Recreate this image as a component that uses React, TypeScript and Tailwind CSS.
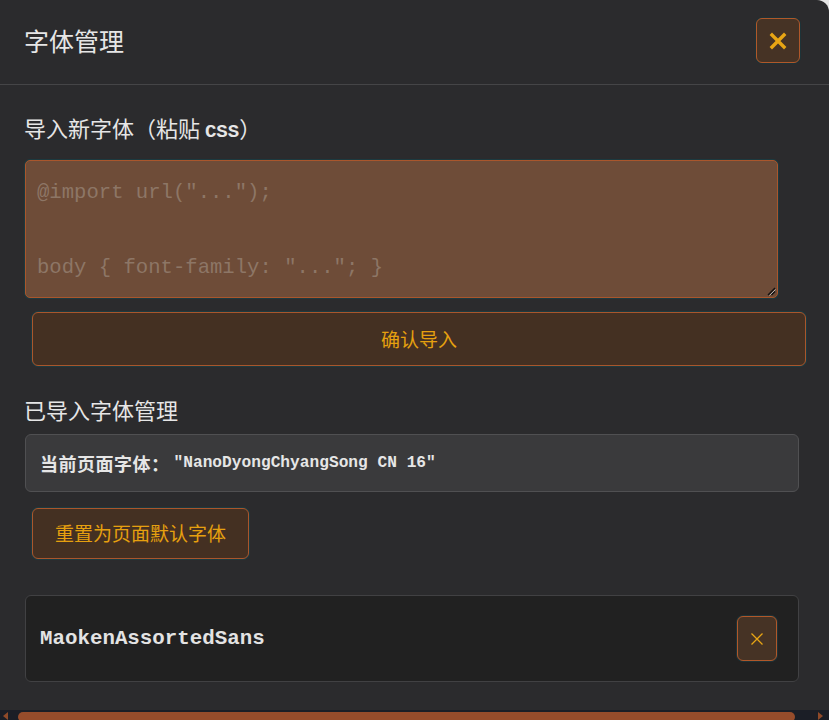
import React from "react";

const cjk = { fontFamily: '"Noto Sans CJK SC", "Noto Sans", sans-serif' };
const mono = { fontFamily: '"Liberation Mono", "DejaVu Sans Mono", "Noto Sans CJK SC", monospace' };

export default function App() {
  return (
    <div className="w-[829px] h-[720px] bg-[#e5e5e5] overflow-hidden">
      <div className="w-[829px] h-[720px] bg-[#2b2b2d] rounded-tr-[12px] flex flex-col overflow-hidden" style={cjk}>
        {/* header */}
        <div className="h-[85px] shrink-0 flex items-center justify-between pl-[24px] pr-[29px] border-b border-[#454547]">
          <div className="text-[25px] leading-[30px] text-[#e6e6e6] mt-[-5px]">字体管理</div>
          <button className="w-[44px] h-[45px] rounded-[6px] bg-[#463325] border border-[#b0582a] shadow-[0_0_0_1px_#1d3338] flex items-center justify-center mt-[-3px]">
            <svg width="18" height="18" viewBox="0 0 18 18">
              <path d="M3 3 L15 15 M15 3 L3 15" stroke="#e8a514" strokeWidth="3.4" strokeLinecap="square" />
            </svg>
          </button>
        </div>

        {/* body */}
        <div className="flex-1 flex flex-col pl-[25px]">
          <div className="mt-[27px] mb-[2px] h-[30px] text-[22px] leading-[30px] text-[#e6e6e6] ml-[-1px] overflow-hidden">
            导入新字体（粘贴 <span className="font-bold text-[19px] leading-none align-baseline" style={mono}>CSS</span>）
          </div>
          <div className="mt-[16px] relative w-[753px] h-[138px] shrink-0 rounded-[5px] bg-[#6e4c38] border border-[#a9562c] shadow-[0_0_0_1px_#1c3a40] px-[11px] pt-[13px]">
            <div className="text-[20.6px] leading-[37.5px] text-[#8d7666] whitespace-pre" style={mono}>
              {'@import url("...");\n\nbody { font-family: "..."; }'}
            </div>
            <svg className="absolute right-[1px] bottom-[1px]" width="9" height="9" viewBox="0 0 9 9">
              <path d="M8 1 L1 8 M8 4.5 L4.5 8" stroke="#111" strokeWidth="1.4" />
              <path d="M8.5 2.5 L2.5 8.5" stroke="#ccc" strokeWidth="0.8" />
            </svg>
          </div>

          <button className="mt-[14px] ml-[7px] w-[774px] h-[54px] shrink-0 rounded-[6px] bg-[#443022] border border-[#a9562c] shadow-[0_0_0_1px_#1c3a40] text-[19px] text-[#e6a00f] flex items-center justify-center">
            确认导入
          </button>

          <div className="mt-[28px] mb-[1px] h-[30px] text-[22px] leading-[30px] text-[#e6e6e6] ml-[-1px]">已导入字体管理</div>

          <div className="mt-[9px] w-[774px] h-[58px] shrink-0 rounded-[6px] bg-[#3a3a3c] border border-[#505052] flex items-center pl-[14px]">
            <span className="text-[18px] font-bold text-[#e6e6e6] tracking-[0.5px]">当前页面字体：</span>
            <span className="text-[16.2px] font-bold text-[#e6e6e6] ml-[4px]" style={mono}>"NanoDyongChyangSong CN 16"</span>
          </div>

          <button className="mt-[16px] ml-[7px] w-[217px] h-[51px] shrink-0 rounded-[6px] bg-[#443022] border border-[#a9562c] shadow-[0_0_0_1px_#1c3a40] text-[19px] text-[#e6a00f] flex items-center justify-center">
            重置为页面默认字体
          </button>

          <div className="mt-[36px] w-[774px] h-[87px] shrink-0 rounded-[6px] bg-[#212121] border border-[#414143] flex items-center justify-between pl-[14px] pr-[21px]">
            <span className="text-[20.8px] font-bold text-[#e3e3e3]" style={mono}>MaokenAssortedSans</span>
            <button className="w-[40px] h-[45px] rounded-[6px] bg-[#463325] border border-[#b0582a] shadow-[0_0_0_1px_#1d3338] flex items-center justify-center">
              <svg width="14" height="14" viewBox="0 0 14 14">
                <path d="M1.5 1.5 L12.5 12.5 M12.5 1.5 L1.5 12.5" stroke="#e8a514" strokeWidth="1.3" />
              </svg>
            </button>
          </div>
        </div>

        {/* horizontal scrollbar */}
        <div className="h-[10px] shrink-0 bg-[#1b1e26] flex items-start relative">
          <svg className="absolute left-[3px] top-[2px]" width="5" height="8" viewBox="0 0 5 8">
            <path d="M5 0 L0 4 L5 8 Z" fill="#8f4a29" />
          </svg>
          <div className="ml-[18px] mt-[2px] w-[777px] h-[10px] rounded-full bg-[#964c2b]" />
          <svg className="absolute right-[6px] top-[2px]" width="5" height="8" viewBox="0 0 5 8">
            <path d="M0 0 L5 4 L0 8 Z" fill="#8f4a29" />
          </svg>
        </div>
      </div>
    </div>
  );
}
